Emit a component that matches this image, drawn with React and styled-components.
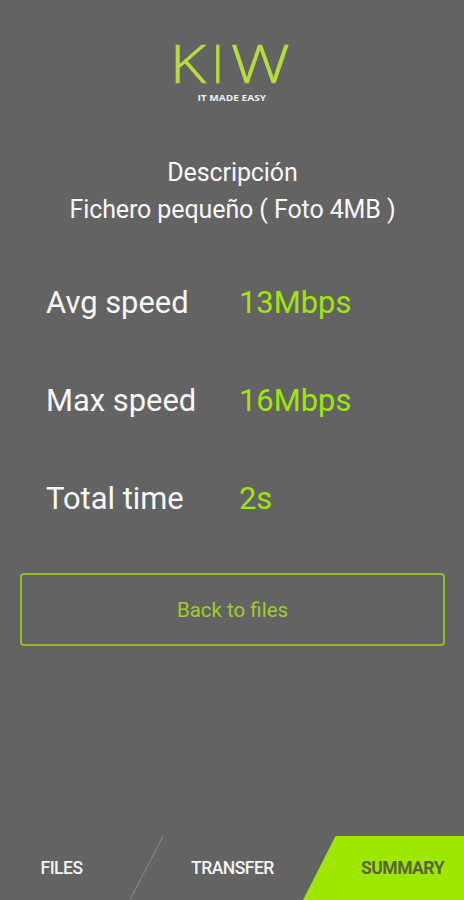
import React from 'react'
import styled, { createGlobalStyle } from 'styled-components'

const GlobalStyle = createGlobalStyle`
    * {
        box-sizing: border-box;
    }
    body {
        margin: 0;
        background: #636363;
        font-family: Roboto, sans-serif;
    }
`

const StyledScreen = styled.div`
    display: flex;
    flex-direction: column;
    width: 100%;
    height: 100vh;
    background: #636363;
    color: #f8f8f8;
    overflow: hidden;
`

const StyledLogo = styled.svg`
    display: block;
    width: 128px;
    height: 100px;
    margin: 18px auto 0;
    overflow: visible;
    font-family: 'Open Sans', sans-serif;
`

const StyledDescription = styled.div`
    margin-top: 36px;
    padding-left: 1px;
    font-size: 25px;
    line-height: 37px;
    letter-spacing: -0.1px;
    text-align: center;
`

const StyledStats = styled.dl`
    display: grid;
    grid-template-columns: 193px 1fr;
    grid-auto-rows: 98px;
    align-items: center;
    margin: 26px 0 0;
    padding-left: 46px;
    font-size: 30.9px;
    line-height: 36px;
`

const StyledLabel = styled.dt`
    white-space: nowrap;
`

const StyledValue = styled.dd`
    margin: 0;
    color: #9fe60d;
`

const StyledButton = styled.button`
    height: 73px;
    margin: 25px 19px 0 20px;
    padding: 0;
    border: 2px solid #8fbd2c;
    border-radius: 4px;
    background: transparent;
    color: #9ccf26;
    font-family: inherit;
    font-size: 20.5px;
`

const StyledTabs = styled.nav`
    position: relative;
    display: grid;
    grid-template-columns: 147px 171px 146px;
    height: 65px;
    margin-top: auto;
`

const StyledTabShapes = styled.svg`
    position: absolute;
    top: 0;
    left: 0;
`

const StyledTab = styled.a`
    position: relative;
    display: flex;
    align-items: center;
    padding-left: ${props => props.$indent}px;
    color: ${props => props.$active ? '#56663a' : '#f4f4f4'};
    font-size: 17.5px;
    font-weight: ${props => props.$active ? 700 : 500};
    letter-spacing: -0.5px;
`

const stats = [
    { label: 'Avg speed', value: '13Mbps' },
    { label: 'Max speed', value: '16Mbps' },
    { label: 'Total time', value: '2s' },
]

const Logo = () => (
    <StyledLogo viewBox="0 0 128 100">
        <g fontSize="53.5" fontWeight="300" fill="#b5dd3d" stroke="#b5dd3d" strokeWidth="0.6">
            <text x="1.8" y="65" textLength="36.5" lengthAdjust="spacingAndGlyphs">K</text>
            <text x="43" y="65">I</text>
            <text x="62.8" y="65" textLength="59" lengthAdjust="spacingAndGlyphs">W</text>
        </g>
        <text x="29.5" y="82.5" fontSize="9.5" fontWeight="700" fill="#eeeeee" textLength="68.5" lengthAdjust="spacingAndGlyphs">IT MADE EASY</text>
    </StyledLogo>
)

const App = () => {
    return (
        <>
            <GlobalStyle />
            <StyledScreen>
                <Logo />
                <StyledDescription>
                    <div>Descripción</div>
                    <div>Fichero pequeño ( Foto 4MB )</div>
                </StyledDescription>
                <StyledStats>
                    {stats.map(({ label, value }) => (
                        <React.Fragment key={label}>
                            <StyledLabel>{label}</StyledLabel>
                            <StyledValue>{value}</StyledValue>
                        </React.Fragment>
                    ))}
                </StyledStats>
                <StyledButton>Back to files</StyledButton>
                <StyledTabs>
                    <StyledTabShapes width="464" height="65" viewBox="0 0 464 65">
                        <path d="M163 1L130 65" stroke="#8c8c8c" />
                        <path d="M335.5 1H464V65H303Z" fill="#9fe600" />
                    </StyledTabShapes>
                    <StyledTab $indent={40.5}>FILES</StyledTab>
                    <StyledTab $indent={44}>TRANSFER</StyledTab>
                    <StyledTab $indent={43} $active>SUMMARY</StyledTab>
                </StyledTabs>
            </StyledScreen>
        </>
    )
}

export default App
